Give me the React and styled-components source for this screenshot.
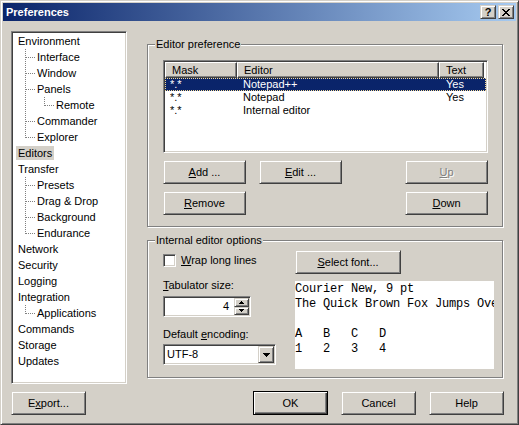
import React from 'react';
import styled, { createGlobalStyle, css } from 'styled-components';

const Global = createGlobalStyle`
  html, body { margin: 0; padding: 0; background: #D4D0C8; }
  body {
    font-family: "Liberation Sans", Arial, sans-serif;
    font-size: 11px;
    color: #000;
  }
  * { box-sizing: border-box; }
`;

const sunken = css`
  border: 1px solid;
  border-color: #808080 #fff #fff #808080;
  box-shadow: inset 1px 1px #404040, inset -1px -1px #D4D0C8;
`;

const raised = css`
  border: 1px solid;
  border-color: #D4D0C8 #404040 #404040 #D4D0C8;
  box-shadow: inset 1px 1px #fff, inset -1px -1px #808080;
`;

const Window = styled.div`
  width: 519px;
  height: 425px;
  background: #D4D0C8;
  border: 1px solid;
  border-color: #D4D0C8 #404040 #404040 #D4D0C8;
  box-shadow: inset 1px 1px #fff, inset -1px -1px #808080;
  padding: 2px;
  display: flex;
  flex-direction: column;
`;

const TitleBar = styled.div`
  height: 18px;
  flex: none;
  display: flex;
  align-items: center;
  padding: 0 2px 0 2px;
  background: linear-gradient(to right, #0A246A, #A6CAF0);
`;

const TitleText = styled.div`
  flex: 1;
  color: #fff;
  font-weight: bold;
  line-height: 18px;
  padding-left: 1px;
`;

const CaptionButtons = styled.div`
  display: flex;
  gap: 2px;
`;

const CaptionButton = styled.div`
  width: 16px;
  height: 14px;
  background: #D4D0C8;
  ${raised};
  display: flex;
  align-items: center;
  justify-content: center;
  font-weight: bold;
  font-size: 11px;
  line-height: 12px;
`;

const Body = styled.div`
  flex: 1;
  display: flex;
  flex-direction: column;
  padding: 10px 12px 7px 8px;
`;

const Main = styled.div`
  display: flex;
  gap: 20px;
  height: 353px;
  margin-bottom: 7px;
`;

const Tree = styled.div`
  width: 116px;
  height: 353px;
  flex: none;
  background: #fff;
  ${sunken};
  padding: 1px 0 0 1px;
`;

const TreeRow = styled.div`
  display: flex;
  align-items: center;
  height: 16px;
`;

const dots = (dir) =>
  `repeating-linear-gradient(${dir}, #808080 0 1px, transparent 1px 2px)`;

const Guide = styled.div`
  flex: none;
  height: 16px;
  width: ${(p) => (p.$kind === 'line' ? 19 : 22)}px;
  background-repeat: no-repeat;
  ${(p) =>
    p.$kind === 'line' &&
    css`
      background-image: ${dots('to bottom')};
      background-size: 1px 16px;
      background-position: 12px 0;
    `}
  ${(p) =>
    p.$kind === 'tee' &&
    css`
      background-image: ${dots('to bottom')}, ${dots('to right')};
      background-size: 1px 16px, 9px 1px;
      background-position: 12px 0, 13px 8px;
    `}
  ${(p) =>
    p.$kind === 'corner' &&
    css`
      background-image: ${dots('to bottom')}, ${dots('to right')};
      background-size: 1px 9px, 9px 1px;
      background-position: 12px 0, 13px 8px;
    `}
`;

const TreeLabel = styled.div`
  height: 14px;
  line-height: 14px;
  padding: 0 2px;
  white-space: nowrap;
  margin-left: ${(p) => (p.$root ? 3 : 0)}px;
  background: ${(p) => (p.$selected ? '#D4D0C8' : 'transparent')};
`;

const Pane = styled.div`
  flex: 1;
  display: flex;
  flex-direction: column;
`;

const Group = styled.div`
  position: relative;
  width: 356px;
  height: ${(p) => p.$h}px;
  margin-top: 13px;
  border: 1px solid #808080;
  box-shadow: inset 1px 1px #fff, 1px 1px #fff;
  padding: ${(p) => p.$pad};
`;

const Legend = styled.span`
  position: absolute;
  top: -7px;
  left: 7px;
  padding: 0 1px;
  line-height: 13px;
  background: #D4D0C8;
  white-space: nowrap;
`;

const ListView = styled.div`
  height: 93px;
  background: #fff;
  ${sunken};
  padding: 1px;
  margin-bottom: 7px;
  overflow: hidden;
`;

const HeaderRow = styled.div`
  display: flex;
  height: 16px;
`;

const HeaderCell = styled.div`
  width: ${(p) => p.$w}px;
  flex: none;
  height: 16px;
  line-height: 14px;
  padding-left: 6px;
  background: #D4D0C8;
  border: 1px solid;
  border-color: #fff #404040 #404040 #fff;
  box-shadow: inset -1px -1px #808080;
`;

const Row = styled.div`
  display: flex;
  height: 13px;
  line-height: 13px;
  background: ${(p) => (p.$selected ? '#0A246A' : 'transparent')};
  color: ${(p) => (p.$selected ? '#fff' : '#000')};
  outline: ${(p) => (p.$selected ? '1px dotted #F5DB95' : 'none')};
  outline-offset: -1px;
`;

const Cell = styled.div`
  width: ${(p) => p.$w}px;
  flex: none;
  padding-left: ${(p) => p.$pl}px;
  white-space: nowrap;
`;

const ButtonGrid = styled.div`
  display: grid;
  grid-template-columns: 83px 83px 1fr 83px;
  grid-auto-rows: 24px;
  column-gap: 13px;
  row-gap: 7px;
`;

const Button = styled.button`
  font: inherit;
  color: #000;
  width: ${(p) => p.$w || 75}px;
  height: ${(p) => p.$h || 24}px;
  margin: 0;
  padding: 0;
  background: #D4D0C8;
  ${raised};
  grid-column: ${(p) => p.$col || 'auto'};
  line-height: 13px;
  ${(p) =>
    p.$default &&
    css`
      border-color: #000;
      box-shadow: inset 1px 1px #fff, inset -1px -1px #404040, inset -2px -2px #808080;
    `}
  ${(p) =>
    p.disabled &&
    css`
      color: #808080;
      text-shadow: 1px 1px #fff;
    `}
`;

const Options = styled.div`
  display: flex;
  gap: 19px;
`;

const LeftCol = styled.div`
  width: 113px;
  flex: none;
  display: flex;
  flex-direction: column;
  padding-top: 4px;
`;

const CheckRow = styled.label`
  display: flex;
  align-items: center;
  gap: 5px;
  height: 13px;
  line-height: 13px;
  white-space: nowrap;
`;

const CheckBox = styled.span`
  width: 13px;
  height: 13px;
  flex: none;
  background: #fff;
  ${sunken};
`;

const FieldLabel = styled.div`
  line-height: 13px;
  height: 13px;
  white-space: nowrap;
  margin-top: ${(p) => p.$mt}px;
  margin-bottom: ${(p) => p.$mb}px;
`;

const Spin = styled.div`
  width: 88px;
  height: 21px;
  background: #fff;
  ${sunken};
  padding: 1px;
  display: flex;
`;

const SpinValue = styled.div`
  flex: 1;
  text-align: right;
  padding-right: 5px;
  line-height: 17px;
`;

const SpinButtons = styled.div`
  width: 15px;
  display: flex;
  flex-direction: column;
`;

const SpinButton = styled.div`
  flex: 1;
  background: #D4D0C8;
  ${raised};
  display: flex;
  align-items: center;
  justify-content: center;
`;

const Combo = styled.div`
  width: 113px;
  height: 21px;
  background: #fff;
  ${sunken};
  padding: 1px;
  display: flex;
`;

const ComboValue = styled.div`
  flex: 1;
  padding-left: 2px;
  line-height: 17px;
`;

const ComboButton = styled.div`
  width: 16px;
  background: #D4D0C8;
  ${raised};
  display: flex;
  align-items: center;
  justify-content: center;
`;

const RightCol = styled.div`
  width: 199px;
  flex: none;
  display: flex;
  flex-direction: column;
`;

const Preview = styled.pre`
  margin: 7px 0 0;
  width: 199px;
  height: 88px;
  background: #fff;
  overflow: hidden;
  font-family: "Liberation Mono", "Courier New", monospace;
  font-size: 12px;
  letter-spacing: -0.2px;
  line-height: 15px;
  padding-top: 1px;
  white-space: pre;
`;

const Footer = styled.div`
  display: flex;
  gap: 13px;
  height: 24px;
`;

const Spacer = styled.div`
  flex: 1;
`;

const treeItems = [
  { label: 'Environment' },
  { label: 'Interface', guides: ['tee'] },
  { label: 'Window', guides: ['tee'] },
  { label: 'Panels', guides: ['tee'] },
  { label: 'Remote', guides: ['line', 'corner'] },
  { label: 'Commander', guides: ['tee'] },
  { label: 'Explorer', guides: ['corner'] },
  { label: 'Editors', selected: true },
  { label: 'Transfer' },
  { label: 'Presets', guides: ['tee'] },
  { label: 'Drag & Drop', guides: ['tee'] },
  { label: 'Background', guides: ['tee'] },
  { label: 'Endurance', guides: ['corner'] },
  { label: 'Network' },
  { label: 'Security' },
  { label: 'Logging' },
  { label: 'Integration' },
  { label: 'Applications', guides: ['corner'] },
  { label: 'Commands' },
  { label: 'Storage' },
  { label: 'Updates' },
];

const editors = [
  { mask: '*.*', editor: 'Notepad++', text: 'Yes', selected: true },
  { mask: '*.*', editor: 'Notepad', text: 'Yes' },
  { mask: '*.*', editor: 'Internal editor', text: '' },
];

const CloseGlyph = () => (
  <svg width="8" height="7" viewBox="0 0 8 7" shapeRendering="crispEdges">
    <g fill="#000">
      <rect x="0" y="0" width="2" height="1" />
      <rect x="6" y="0" width="2" height="1" />
      <rect x="1" y="1" width="2" height="1" />
      <rect x="5" y="1" width="2" height="1" />
      <rect x="2" y="2" width="4" height="1" />
      <rect x="3" y="3" width="2" height="1" />
      <rect x="2" y="4" width="4" height="1" />
      <rect x="1" y="5" width="2" height="1" />
      <rect x="5" y="5" width="2" height="1" />
      <rect x="0" y="6" width="2" height="1" />
      <rect x="6" y="6" width="2" height="1" />
    </g>
  </svg>
);

const Arrow = ({ up, w = 5 }) => {
  const rows = Math.ceil(w / 2);
  return (
    <svg width={w} height={rows} viewBox={`0 0 ${w} ${rows}`} shapeRendering="crispEdges">
      {Array.from({ length: rows }).map((_, i) => {
        const len = up ? 1 + i * 2 : w - i * 2;
        return <rect key={i} x={(w - len) / 2} y={i} width={len} height="1" fill="#000" />;
      })}
    </svg>
  );
};

export default function App() {
  return (
    <>
      <Global />
      <Window>
        <TitleBar>
          <TitleText>Preferences</TitleText>
          <CaptionButtons>
            <CaptionButton>?</CaptionButton>
            <CaptionButton>
              <CloseGlyph />
            </CaptionButton>
          </CaptionButtons>
        </TitleBar>
        <Body>
          <Main>
            <Tree>
              {treeItems.map((it) => (
                <TreeRow key={it.label}>
                  {(it.guides || []).map((g, i) => (
                    <Guide key={i} $kind={g} />
                  ))}
                  <TreeLabel $root={!it.guides} $selected={it.selected}>
                    {it.label}
                  </TreeLabel>
                </TreeRow>
              ))}
            </Tree>
            <Pane>
              <Group $h={183} $pad="15px 14px 0 15px">
                <Legend>Editor preference</Legend>
                <ListView>
                  <HeaderRow>
                    <HeaderCell $w={72}>Mask</HeaderCell>
                    <HeaderCell $w={202}>Editor</HeaderCell>
                    <HeaderCell $w={45}>Text</HeaderCell>
                  </HeaderRow>
                  {editors.map((e) => (
                    <Row key={e.editor} $selected={e.selected}>
                      <Cell $w={72} $pl={5}>{e.mask}</Cell>
                      <Cell $w={202} $pl={6}>{e.editor}</Cell>
                      <Cell $w={45} $pl={7}>{e.text}</Cell>
                    </Row>
                  ))}
                </ListView>
                <ButtonGrid>
                  <Button $w={83}><u>A</u>dd ...</Button>
                  <Button $w={83}><u>E</u>dit ...</Button>
                  <Button $w={83} $col="4" disabled><u>U</u>p</Button>
                  <Button $w={83}><u>R</u>emove</Button>
                  <Button $w={83} $col="4"><u>D</u>own</Button>
                </ButtonGrid>
              </Group>
              <Group $h={138} $pad="9px 8px 0 15px">
                <Legend>Internal editor options</Legend>
                <Options>
                  <LeftCol>
                    <CheckRow>
                      <CheckBox />
                      <span><u>W</u>rap long lines</span>
                    </CheckRow>
                    <FieldLabel $mt={12} $mb={4}><u>T</u>abulator size:</FieldLabel>
                    <Spin>
                      <SpinValue>4</SpinValue>
                      <SpinButtons>
                        <SpinButton><Arrow up /></SpinButton>
                        <SpinButton><Arrow /></SpinButton>
                      </SpinButtons>
                    </Spin>
                    <FieldLabel $mt={11} $mb={3}>Default <u>e</u>ncoding:</FieldLabel>
                    <Combo>
                      <ComboValue>UTF-8</ComboValue>
                      <ComboButton><Arrow w={7} /></ComboButton>
                    </Combo>
                  </LeftCol>
                  <RightCol>
                    <Button $w={106} $h={24}><u>S</u>elect font...</Button>
                    <Preview>{`Courier New, 9 pt
The Quick Brown Fox Jumps Over The Lazy Dog

A   B   C   D
1   2   3   4`}</Preview>
                  </RightCol>
                </Options>
              </Group>
            </Pane>
          </Main>
          <Footer>
            <Button>E<u>x</u>port...</Button>
            <Spacer />
            <Button $default>OK</Button>
            <Button>Cancel</Button>
            <Button>Help</Button>
          </Footer>
        </Body>
      </Window>
    </>
  );
}
